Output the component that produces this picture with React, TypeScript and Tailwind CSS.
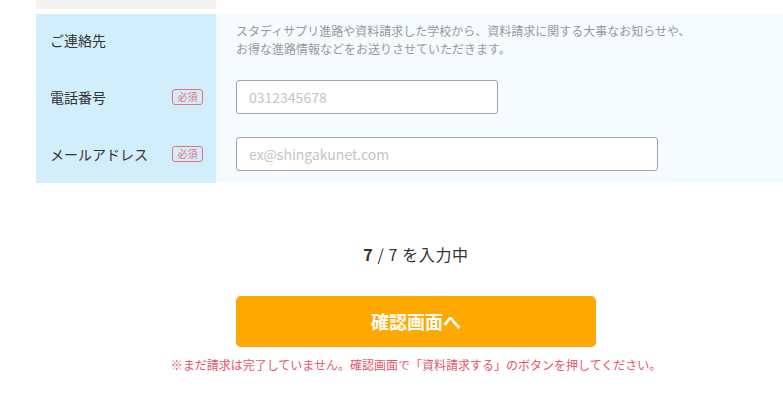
const font = { fontFamily: '"Noto Sans CJK JP", "Noto Sans", sans-serif' };

const Badge = () => (
  <span className="inline-flex h-[16px] w-[31px] items-center justify-center rounded-[3px] border border-[#e8707c] text-[10px] leading-none text-[#e8707c]">
    必須
  </span>
);

const App = () => {
  return (
    <div className="h-[408px] w-[783px] overflow-hidden bg-white text-[#333]" style={font}>
      <div className="ml-[36px] w-[760px]">
        <div className="h-[9px] w-[180px] bg-[#f4f3f2]" />
        <div className="mt-[5px] flex">
          <div className="w-[180px] bg-[#d3eefb]">
            <div className="flex h-[52px] items-center pl-[14px] text-[14px]">ご連絡先</div>
            <div className="flex h-[59px] items-center justify-between pl-[14px] pr-[13px] pt-[3px] text-[14px]">
              <span>電話番号</span>
              <Badge />
            </div>
            <div className="flex h-[58px] items-center justify-between pl-[14px] pr-[13px] text-[14px]">
              <span>メールアドレス</span>
              <Badge />
            </div>
          </div>
          <div className="flex-1 bg-[#f5fbff] pl-[20px]">
            <div className="flex h-[52px] flex-col justify-center text-[12px] leading-[18px] text-[#999]">
              <p>スタディサプリ進路や資料請求した学校から、資料請求に関する大事なお知らせや、</p>
              <p>お得な進路情報などをお送りさせていただきます。</p>
            </div>
            <div className="pt-[14px] pb-[11px]">
              <input
                className="h-[34px] w-[262px] rounded-[3px] border border-[#a3a3a3] bg-white px-[12px] text-[14px] placeholder:text-[#c4c4c4]"
                placeholder="0312345678"
              />
            </div>
            <div className="pt-[12px] pb-[12px]">
              <input
                className="h-[34px] w-[422px] rounded-[3px] border border-[#a3a3a3] bg-white px-[12px] text-[14px] placeholder:text-[#c4c4c4]"
                placeholder="ex@shingakunet.com"
              />
            </div>
          </div>
        </div>
        <p className="mt-[59px] text-center text-[16px] leading-[24px] tracking-[0.6px]">
          <span className="font-bold">7</span> / 7 を入力中
        </p>
        <div className="mt-[30px] flex justify-center">
          <button className="h-[51px] w-[360px] rounded-[5px] bg-[#ffa800] text-[18px] font-bold text-white">
            確認画面へ
          </button>
        </div>
        <p className="mt-[9px] text-center text-[12px] leading-[18px] text-[#e9546b]">
          ※まだ請求は完了していません。確認画面で「資料請求する」のボタンを押してください。
        </p>
      </div>
    </div>
  );
};

export default App;
